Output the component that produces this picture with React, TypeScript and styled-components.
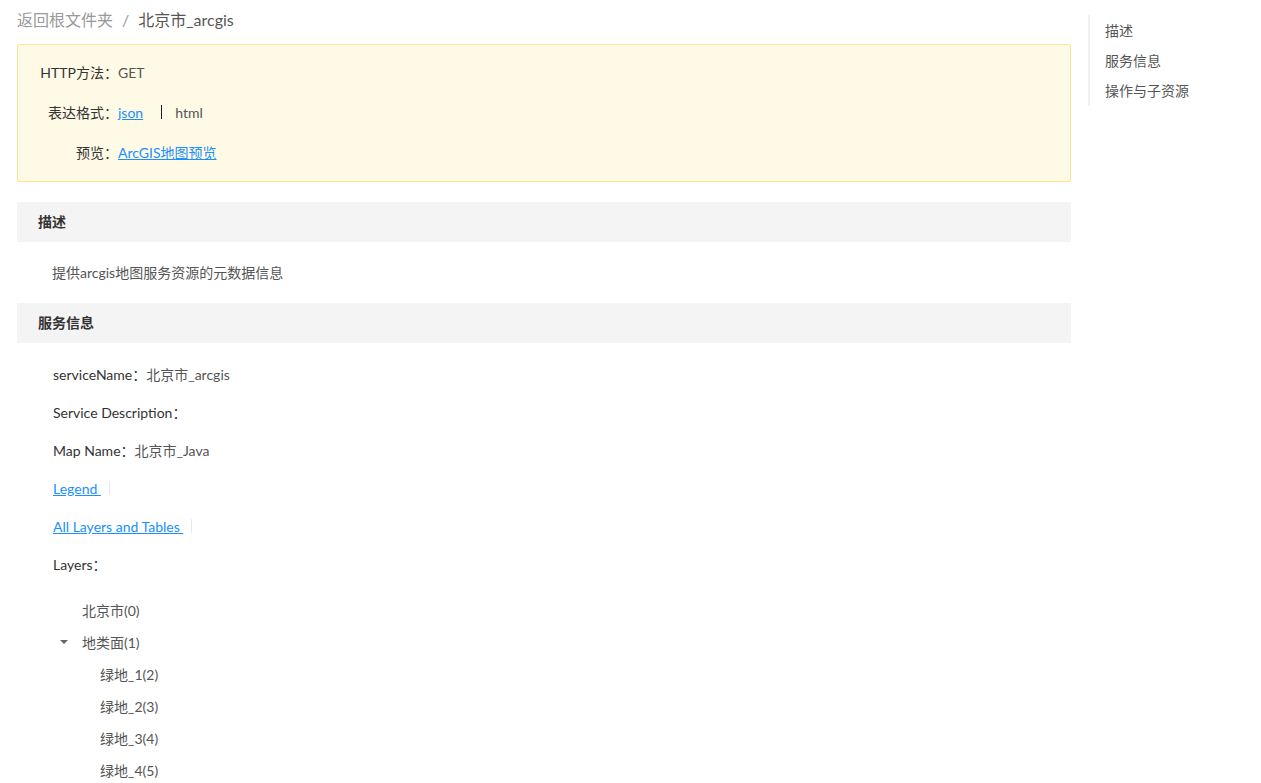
import React from "react";
import styled, { createGlobalStyle } from "styled-components";

const GlobalStyle = createGlobalStyle`
  html, body {
    margin: 0;
    padding: 0;
    background: #fff;
  }
  body {
    font-family: Lato, "Noto Sans CJK SC", sans-serif;
    font-size: 14px;
    color: #333;
  }
`;

const Page = styled.div`
  display: flex;
  align-items: flex-start;
  padding: 0 0 0 17px;
  gap: 17px;
`;

const Main = styled.main`
  width: 1054px;
  flex-shrink: 0;
`;

const Breadcrumb = styled.div`
  display: flex;
  align-items: center;
  gap: 9px;
  padding-top: 8px;
  height: 24px;
  line-height: 24px;
  font-size: 16px;
  margin-bottom: 12px;
`;

const CrumbLink = styled.a`
  color: #999;
  text-decoration: none;
  cursor: pointer;
`;

const CrumbSep = styled.span`
  color: #999;
`;

const CrumbCurrent = styled.span`
  color: #555;
`;

const InfoBox = styled.div`
  background: #fffae6;
  border: 1px solid #ffe58f;
  border-radius: 2px;
  padding: 7px 0 9px;
  margin-bottom: 20px;
`;

const InfoRow = styled.div`
  display: flex;
  align-items: center;
  height: 40px;
`;

const InfoLabel = styled.span`
  width: 100px;
  text-align: right;
  color: #333;
`;

const InfoValue = styled.span`
  color: #555;
  display: flex;
  align-items: center;
`;

const Link = styled.a`
  color: #1890ff;
  text-decoration: underline;
  cursor: pointer;
  white-space: pre;
`;

const Divider = styled.span<{ $light?: boolean }>`
  display: inline-block;
  width: 1px;
  height: 14px;
  background: ${(p) => (p.$light ? "#e8e8e8" : "#222")};
  margin: ${(p) => (p.$light ? "0 0 0 8px" : "0 13px 0 18px")};
`;

const SectionHeader = styled.h2`
  margin: 0;
  height: 40px;
  line-height: 40px;
  background: #f4f4f4;
  padding-left: 21px;
  font-size: 14px;
  font-weight: bold;
  color: #333;
`;

const Description = styled.p`
  margin: 0;
  padding: 20px 0 20px 35px;
  line-height: 21px;
  color: #555;
`;

const ServiceList = styled.div`
  padding: 12px 0 0 36px;
`;

const ServiceItem = styled.div`
  height: 38px;
  display: flex;
  align-items: center;
  color: #333;
`;

const ServiceValue = styled.span`
  color: #555;
`;

const Tree = styled.ul`
  list-style: none;
  margin: 0;
  padding: 11px 0 0 4px;
`;

const TreeRow = styled.li<{ $level: number }>`
  height: 32px;
  display: flex;
  align-items: center;
  padding-left: ${(p) => p.$level * 18}px;
  color: #555;
`;

const Caret = styled.span<{ $open?: boolean }>`
  width: 14px;
  margin-right: 11px;
  display: inline-flex;
  justify-content: center;
  &::before {
    content: "";
    display: ${(p) => (p.$open ? "block" : "none")};
    border-left: 4px solid transparent;
    border-right: 4px solid transparent;
    border-top: 4px solid #666;
  }
`;

const SideNav = styled.nav`
  margin-top: 15px;
  border-left: 2px solid #f0f0f0;
  padding: 1px 0 0 15px;
`;

const NavItem = styled.a`
  display: block;
  height: 30px;
  line-height: 30px;
  color: #555;
  text-decoration: none;
  cursor: pointer;
`;

const layers = [
  { name: "北京市(0)", level: 0 },
  { name: "地类面(1)", level: 0, open: true },
  { name: "绿地_1(2)", level: 1 },
  { name: "绿地_2(3)", level: 1 },
  { name: "绿地_3(4)", level: 1 },
  { name: "绿地_4(5)", level: 1 },
];

export default function App() {
  return (
    <>
      <GlobalStyle />
      <Page>
        <Main>
          <Breadcrumb>
            <CrumbLink>返回根文件夹</CrumbLink>
            <CrumbSep>/</CrumbSep>
            <CrumbCurrent>北京市_arcgis</CrumbCurrent>
          </Breadcrumb>

          <InfoBox>
            <InfoRow>
              <InfoLabel>HTTP方法：</InfoLabel>
              <InfoValue>GET</InfoValue>
            </InfoRow>
            <InfoRow>
              <InfoLabel>表达格式：</InfoLabel>
              <InfoValue>
                <Link>json</Link>
                <Divider />
                html
              </InfoValue>
            </InfoRow>
            <InfoRow>
              <InfoLabel>预览：</InfoLabel>
              <InfoValue>
                <Link>ArcGIS地图预览</Link>
              </InfoValue>
            </InfoRow>
          </InfoBox>

          <SectionHeader>描述</SectionHeader>
          <Description>提供arcgis地图服务资源的元数据信息</Description>

          <SectionHeader>服务信息</SectionHeader>
          <ServiceList>
            <ServiceItem>
              serviceName：<ServiceValue>北京市_arcgis</ServiceValue>
            </ServiceItem>
            <ServiceItem>Service Description：</ServiceItem>
            <ServiceItem>
              Map Name：<ServiceValue>北京市_Java</ServiceValue>
            </ServiceItem>
            <ServiceItem>
              <Link>Legend </Link>
              <Divider $light />
            </ServiceItem>
            <ServiceItem>
              <Link>All Layers and Tables </Link>
              <Divider $light />
            </ServiceItem>
            <ServiceItem>Layers：</ServiceItem>
            <Tree>
              {layers.map((l) => (
                <TreeRow key={l.name} $level={l.level}>
                  <Caret $open={l.open} />
                  {l.name}
                </TreeRow>
              ))}
            </Tree>
          </ServiceList>
        </Main>

        <SideNav>
          <NavItem>描述</NavItem>
          <NavItem>服务信息</NavItem>
          <NavItem>操作与子资源</NavItem>
        </SideNav>
      </Page>
    </>
  );
}
